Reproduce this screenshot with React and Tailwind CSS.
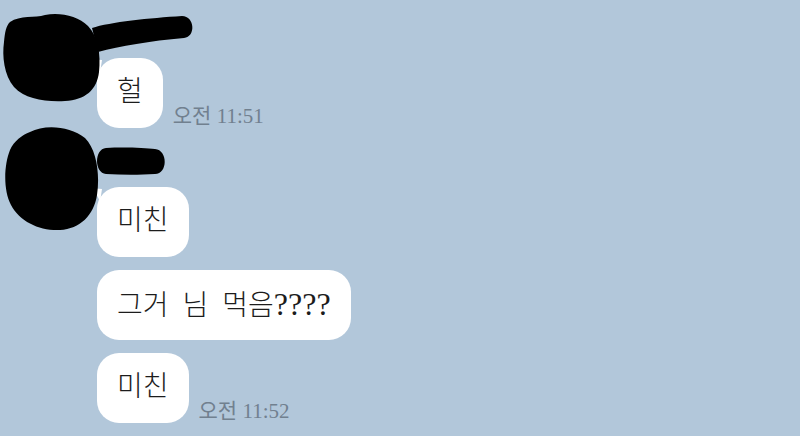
const Tail = () => (
  <svg
    className="absolute -left-[7px] top-[1px]"
    width="12"
    height="14"
    viewBox="0 0 12 14"
  >
    <path d="M12,1 L0,0 Q7,5 10,14 Z" fill="#ffffff" />
  </svg>
);

const Bubble = ({ children, tail }) => (
  <div className="relative flex h-[70px] items-center rounded-[22px] bg-white px-[20px] text-[28px] font-light leading-none text-[#1c1c1c] [word-spacing:7px]">
    {tail && <Tail />}
    <span className="pb-[2px]">{children}</span>
  </div>
);

const Time = ({ value }) => (
  <span className="mb-[1px] ml-[10px] text-[21px] leading-none text-[#71808f]">
    {value}
  </span>
);

const MessageRow = ({ children, time, tail }) => (
  <div className="flex items-end">
    <Bubble tail={tail}>{children}</Bubble>
    {time && <Time value={time} />}
  </div>
);

export default function App() {
  return (
    <div
      className="h-[436px] w-[800px] overflow-hidden bg-[#b2c7da]"
      style={{ fontFamily: '"Liberation Serif", "Noto Sans CJK KR", serif' }}
    >
      {/* ================= GROUP 1 ================= */}
      <div className="relative flex pt-[14px]">
        <div className="w-[97px] shrink-0" />
        <div className="flex flex-col">
          <div className="h-[44px]" />
          <MessageRow time="오전 11:51" tail>
            헐
          </MessageRow>
        </div>

        {/* redaction scribble over avatar + name */}
        <svg
          className="absolute left-0 top-[10px] z-10"
          width="200"
          height="95"
          viewBox="0 10 200 95"
        >
          <path
            d="M10,22 C20,15 35,18 45,15 C60,12 78,16 88,26 C98,36 101,55 99,72 C97,90 85,100 65,101 C45,102 25,99 14,87 C4,75 2,56 4,42 C5,32 6,26 10,22 Z"
            fill="#000"
          />
          <path
            d="M92,28 C110,22 150,18 182,16 C195,16 196,37 184,38 C150,41 120,46 98,52 Z"
            fill="#000"
          />
        </svg>
      </div>

      {/* ================= GROUP 2 ================= */}
      <div className="relative mt-[15px] flex">
        <div className="w-[97px] shrink-0" />
        <div className="flex flex-col gap-[13px]">
          <div className="-mb-[13px] h-[44px]" />
          <MessageRow tail>미친</MessageRow>
          <MessageRow>
            그거 님 먹음<span className="text-[32px]">????</span>
          </MessageRow>
          <MessageRow time="오전 11:52">미친</MessageRow>
        </div>

        <svg
          className="absolute left-0 -top-[16px] z-10"
          width="200"
          height="110"
          viewBox="0 127 200 110"
        >
          <path
            d="M30,132 C45,124 70,126 85,138 C97,150 100,175 97,195 C94,215 80,229 60,230 C40,231 20,222 11,205 C3,190 4,165 10,150 C14,141 22,135 30,132 Z"
            fill="#000"
          />
          <path
            d="M106,148 C125,147 145,148 155,149 C168,150 168,174 155,174 C140,175 122,175 106,174 C94,173 94,149 106,148 Z"
            fill="#000"
          />
        </svg>
      </div>
    </div>
  );
}
